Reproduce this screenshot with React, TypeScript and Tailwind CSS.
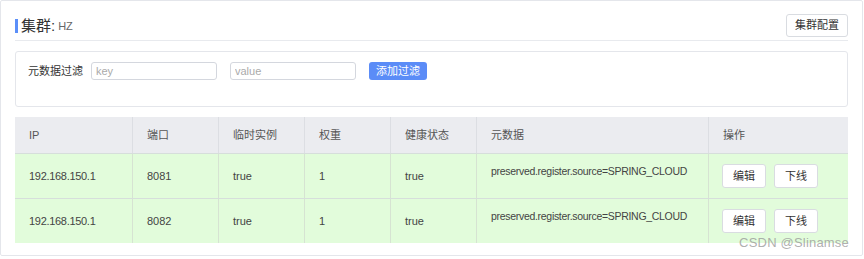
import React from 'react';

const font = { fontFamily: '"Liberation Sans", "Noto Sans CJK SC", sans-serif' };

const rows = [
  { ip: '192.168.150.1', port: '8081', ephemeral: 'true', weight: '1', healthy: 'true', meta: 'preserved.register.source=SPRING_CLOUD' },
  { ip: '192.168.150.1', port: '8082', ephemeral: 'true', weight: '1', healthy: 'true', meta: 'preserved.register.source=SPRING_CLOUD' },
];

const cols = 'grid grid-cols-[118px_86px_86px_86px_86px_232px_138px]';

export default function App() {
  return (
    <div className="w-[864px] h-[259px] bg-white text-[#333]" style={font}>
      <div className="relative w-[863px] h-[256px] border border-[#e4e6eb] rounded-[2px] px-[14px] bg-white">
        {/* header */}
        <div className="flex items-center justify-between pt-[13px] pb-[3px] border-b border-[#e8eaee]">
          <div className="flex items-center">
            <span className="w-[3px] h-[14px] bg-[#5b8ff9] mr-[3px]" />
            <span className="text-[15px] leading-[23px] text-[#333]">集群:</span>
            <span className="text-[11px] ml-[3px] text-[#666] mt-[2px]">HZ</span>
          </div>
          <button className="w-[62px] h-[23px] border border-[#d9dce1] rounded-[3px] bg-white text-[11px] text-[#333]">
            集群配置
          </button>
        </div>

        {/* filter */}
        <div className="mt-[10px] h-[56px] border border-[#e4e6eb] rounded-[3px] pt-[10px] pl-[12px]">
          <div className="flex items-center h-[18px]">
            <span className="text-[11px] text-[#333] whitespace-nowrap">元数据过滤</span>
            <input
              placeholder="key"
              className="ml-[8px] w-[126px] h-[18px] border border-[#d4d7de] rounded-[3px] px-[4px] text-[11px] placeholder:text-[#aaa] outline-none"
            />
            <input
              placeholder="value"
              className="ml-[13px] w-[126px] h-[18px] border border-[#d4d7de] rounded-[3px] px-[4px] text-[11px] placeholder:text-[#aaa] outline-none"
            />
            <button className="ml-[13px] w-[58px] h-[18px] rounded-[3px] bg-[#5b8cf7] text-white text-[11px] whitespace-nowrap">
              添加过滤
            </button>
          </div>
        </div>

        {/* table */}
        <div className="mt-[10px] text-[11px]">
          <div className={`${cols} h-[36px] bg-[#ebecf0] text-[#555]`}>
            {['IP', '端口', '临时实例', '权重', '健康状态', '元数据', '操作'].map((h, i) => (
              <div key={h} className={`flex items-center pl-[14px] ${i < 6 ? 'border-r border-[#dcdee3]' : ''}`}>
                {h}
              </div>
            ))}
          </div>
          {rows.map((r, idx) => (
            <div key={idx} className={`${cols} h-[45px] bg-[#e2fcdb] text-[#444] border-t border-[#d6dedb]`}>
              <div className="flex items-center pl-[14px] border-r border-[#d6e3d2] tracking-[-0.3px]">{r.ip}</div>
              <div className="flex items-center pl-[14px] border-r border-[#d6e3d2]">{r.port}</div>
              <div className="flex items-center pl-[14px] border-r border-[#d6e3d2]">{r.ephemeral}</div>
              <div className="flex items-center pl-[14px] border-r border-[#d6e3d2]">{r.weight}</div>
              <div className="flex items-center pl-[14px] border-r border-[#d6e3d2]">{r.healthy}</div>
              <div className="pl-[14px] pt-[10px] border-r border-[#d6e3d2] text-[10.5px] tracking-[-0.3px] whitespace-nowrap">{r.meta}</div>
              <div className="flex items-center gap-[8px] pl-[13px]">
                <button className="w-[44px] h-[24px] bg-white border border-[#d9dce1] rounded-[3px] text-[#333]">编辑</button>
                <button className="w-[44px] h-[24px] bg-white border border-[#d9dce1] rounded-[3px] text-[#333]">下线</button>
              </div>
            </div>
          ))}
        </div>

        <span className="absolute right-[13px] bottom-[3px] text-[13px] text-[#9a9a9a]/80 tracking-[0.2px]">
          CSDN @Slinamse
        </span>
      </div>
    </div>
  );
}
